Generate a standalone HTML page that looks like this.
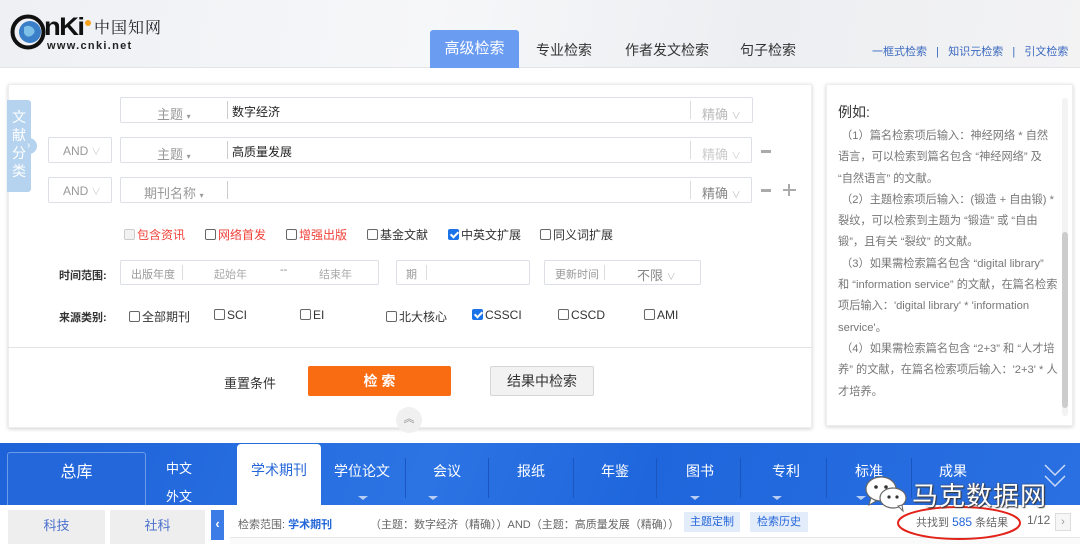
<!DOCTYPE html>
<html><head><meta charset="utf-8"><style>
*{box-sizing:border-box;margin:0;padding:0}
body{width:1080px;height:544px;overflow:hidden;font-family:"Liberation Sans","Noto Sans CJK SC",sans-serif;background:#fff;position:relative;color:#333}
.a{position:absolute;white-space:nowrap}
.hdr{left:0;top:0;width:1080px;height:68px;background:linear-gradient(100deg,#eef0f4 0%,#f6f7f9 40%,#eceef1 70%,#f3f3f4 100%);border-bottom:1px solid #e2e4e8}
.box{position:absolute;border:1px solid #dcdfe6;background:#fff;border-radius:2px}
.g{color:#999}
.cb{display:inline-block;width:11px;height:11px;border:1px solid #666;border-radius:2px;vertical-align:-1px;margin-right:2px;background:#fff}
.cbk{background:#1a73e8;border-color:#1a73e8;position:relative}
.cbk:after{content:"";position:absolute;left:3px;top:0px;width:3px;height:6px;border:solid #fff;border-width:0 2px 2px 0;transform:rotate(45deg)}
.s13{font-size:13px}.s12{font-size:12px}
.nav{left:0;top:443px;width:1080px;height:62px;background:linear-gradient(110deg,#1d62d8 0%,#2c74e4 40%,#1f66dc 60%,#2a70e2 100%)}
.nt{color:#fff;font-size:15px;top:461px}
.dv{top:458px;width:1px;height:40px;background:#1a55c0}
.tri{width:0;height:0;border-left:5px solid transparent;border-right:5px solid transparent;border-top:4px solid #b8cdf3;top:496px}
</style></head><body>
<div class="a hdr"></div>
<!-- logo -->
<svg class="a" style="left:10px;top:14px" width="36" height="36" viewBox="0 0 36 36"><circle cx="18" cy="18" r="15.5" fill="none" stroke="#111" stroke-width="4"/><circle cx="20" cy="18" r="11" fill="#3a7fc8"/><path d="M14 13q5-3 9 1t-2 8q-5 2-7-3z" fill="#7fc0e8"/></svg>
<div class="a" style="left:44px;top:14px;font-size:25px;line-height:26px;font-weight:bold;color:#111;letter-spacing:-1.5px;transform:scaleX(1.1);transform-origin:left">nKi</div>
<div class="a" style="left:85px;top:20px;width:6px;height:6px;border-radius:50%;background:#f7a21b"></div>
<div class="a" style="left:94px;top:17px;font-size:16px;line-height:20px;color:#222;font-family:'Noto Serif CJK SC',serif;letter-spacing:1px">中国知网</div>
<div class="a" style="left:47px;top:40px;font-size:11px;line-height:12px;color:#222;letter-spacing:1.3px;font-weight:bold">www.cnki.net</div>
<div class="a" style="left:430px;top:30px;width:89px;height:38px;background:#6a9cf2;border-radius:3px 3px 0 0;color:#fff;font-size:15px;text-align:center;line-height:38px">高级检索</div>
<div class="a" style="left:536px;top:40px;font-size:14px">专业检索</div>
<div class="a" style="left:625px;top:40px;font-size:14px">作者发文检索</div>
<div class="a" style="left:740px;top:40px;font-size:14px">句子检索</div>
<div class="a" style="left:872px;top:43px;font-size:11px;color:#3c6ac0">一框式检索 &nbsp;&nbsp;|&nbsp;&nbsp; 知识元检索 &nbsp;&nbsp;|&nbsp;&nbsp; 引文检索</div>

<!-- main panel -->
<div class="a" style="left:8px;top:84px;width:804px;height:344px;background:#fff;box-shadow:0 1px 4px rgba(0,0,0,.18);border:1px solid #eee"></div>
<div class="a" style="left:8px;top:347px;width:804px;height:1px;background:#e3e3e3"></div>
<div class="a" style="left:7px;top:100px;width:24px;height:92px;background:#b5d3ef;border-radius:0 3px 3px 0;color:#fff;font-size:14px;line-height:18px;text-align:center;padding-top:8px;white-space:normal">文<br>献<br>分<br>类</div>
<div class="a" style="left:27px;top:138px;width:10px;height:16px;background:#b5d3ef;border-radius:0 8px 8px 0;color:#fff;font-size:10px;line-height:16px">›</div>

<div class="box" style="left:120px;top:97px;width:633px;height:26px"></div>
<div class="box" style="left:120px;top:137px;width:632px;height:26px"></div>
<div class="box" style="left:120px;top:177px;width:632px;height:26px"></div>
<div class="box" style="left:48px;top:137px;width:64px;height:26px"></div>
<div class="box" style="left:48px;top:177px;width:64px;height:26px"></div>
<div class="a s12 g" style="left:63px;top:144px">AND <span style="font-size:9px;color:#ccc">∨</span></div>
<div class="a s12 g" style="left:63px;top:184px">AND <span style="font-size:9px;color:#ccc">∨</span></div>
<div class="a s13 g" style="left:157px;top:104px">主题 <span style="font-size:8px">▾</span></div>
<div class="a s13 g" style="left:157px;top:144px">主题 <span style="font-size:8px">▾</span></div>
<div class="a s13 g" style="left:144px;top:183px">期刊名称 <span style="font-size:8px">▾</span></div>
<div class="a" style="left:227px;top:101px;width:1px;height:18px;background:#ccc"></div>
<div class="a" style="left:227px;top:141px;width:1px;height:18px;background:#ccc"></div>
<div class="a" style="left:227px;top:181px;width:1px;height:18px;background:#ccc"></div>
<div class="a s12" style="left:232px;top:103px;color:#222">数字经济</div>
<div class="a s12" style="left:232px;top:143px;color:#222">高质量发展</div>
<div class="a" style="left:690px;top:101px;width:1px;height:18px;background:#ddd"></div>
<div class="a" style="left:690px;top:141px;width:1px;height:18px;background:#ddd"></div>
<div class="a" style="left:690px;top:181px;width:1px;height:18px;background:#ddd"></div>
<div class="a s13" style="left:702px;top:104px;color:#bbb">精确 <span style="font-size:9px">∨</span></div>
<div class="a s13" style="left:702px;top:144px;color:#ccc">精确 <span style="font-size:9px">∨</span></div>
<div class="a s13" style="left:702px;top:183px;color:#888">精确 <span style="font-size:9px;color:#bbb">∨</span></div>
<div class="a" style="left:761px;top:150px;width:10px;height:3px;background:#aaa"></div>
<div class="a" style="left:761px;top:189px;width:10px;height:3px;background:#aaa"></div>
<div class="a" style="left:783px;top:189px;width:13px;height:2px;background:#aaa"></div>
<div class="a" style="left:788px;top:184px;width:2px;height:12px;background:#aaa"></div>

<div class="a s12" style="left:124px;top:226px;color:#f0423a"><span class="cb" style="border-color:#ccc;background:#f2f2f2"></span>包含资讯</div>
<div class="a s12" style="left:205px;top:226px;color:#f0423a"><span class="cb"></span>网络首发</div>
<div class="a s12" style="left:286px;top:226px;color:#f0423a"><span class="cb"></span>增强出版</div>
<div class="a s12" style="left:367px;top:226px"><span class="cb"></span>基金文献</div>
<div class="a s12" style="left:448px;top:226px"><span class="cb cbk"></span>中英文扩展</div>
<div class="a s12" style="left:540px;top:226px"><span class="cb"></span>同义词扩展</div>

<div class="a" style="left:59px;top:267px;font-size:11px;font-weight:bold;color:#333">时间范围:</div>
<div class="box" style="left:120px;top:260px;width:259px;height:25px"></div>
<div class="a" style="left:182px;top:265px;width:1px;height:15px;background:#ddd"></div>
<div class="a g" style="left:131px;top:266px;font-size:11px">出版年度</div>
<div class="a" style="left:214px;top:266px;font-size:11px;color:#aaa">起始年</div>
<div class="a" style="left:280px;top:264px;font-size:11px;color:#888">--</div>
<div class="a" style="left:319px;top:266px;font-size:11px;color:#aaa">结束年</div>
<div class="box" style="left:396px;top:260px;width:134px;height:25px"></div>
<div class="a" style="left:426px;top:265px;width:1px;height:15px;background:#ddd"></div>
<div class="a g" style="left:406px;top:266px;font-size:11px">期</div>
<div class="box" style="left:544px;top:260px;width:157px;height:25px"></div>
<div class="a" style="left:604px;top:265px;width:1px;height:15px;background:#ddd"></div>
<div class="a g" style="left:555px;top:266px;font-size:11px">更新时间</div>
<div class="a" style="left:637px;top:265px;font-size:13px;color:#888">不限 <span style="font-size:9px;color:#bbb">∨</span></div>

<div class="a" style="left:59px;top:309px;font-size:11px;font-weight:bold;color:#333">来源类别:</div>
<div class="a s12" style="left:129px;top:308px"><span class="cb"></span>全部期刊</div>
<div class="a s12" style="left:214px;top:308px"><span class="cb"></span>SCI</div>
<div class="a s12" style="left:300px;top:308px"><span class="cb"></span>EI</div>
<div class="a s12" style="left:386px;top:308px"><span class="cb"></span>北大核心</div>
<div class="a s12" style="left:472px;top:308px"><span class="cb cbk"></span>CSSCI</div>
<div class="a s12" style="left:558px;top:308px"><span class="cb"></span>CSCD</div>
<div class="a s12" style="left:644px;top:308px"><span class="cb"></span>AMI</div>

<div class="a s13" style="left:224px;top:373px;color:#333">重置条件</div>
<div class="a" style="left:308px;top:366px;width:143px;height:30px;background:#fa6c12;color:#fff;font-weight:bold;font-size:14px;text-align:center;line-height:30px;border-radius:2px">检 索</div>
<div class="a" style="left:490px;top:366px;width:104px;height:30px;background:#f2f2f2;border:1px solid #d6d6d6;color:#333;font-size:14px;text-align:center;line-height:28px;border-radius:2px">结果中检索</div>
<div class="a" style="left:396px;top:407px;width:26px;height:26px;border-radius:50%;background:#f0f0f0;color:#888;font-size:11px;text-align:center;line-height:24px">︽</div>

<!-- right panel -->
<div class="a" style="left:826px;top:84px;width:247px;height:342px;background:#fff;box-shadow:0 1px 4px rgba(0,0,0,.18);border:1px solid #eee"></div>
<div class="a" style="left:1062px;top:98px;width:6px;height:318px;background:#f3f3f3;border-radius:3px"></div>
<div class="a" style="left:1062px;top:232px;width:6px;height:176px;background:#ccc;border-radius:3px"></div>
<div class="a" style="left:838px;top:102px;font-size:14px;color:#333">例如:</div>
<div class="a" style="left:838px;top:126px;width:220px;font-size:11.2px;line-height:21.3px;color:#777;white-space:normal">&nbsp;（1）篇名检索项后输入：神经网络 * 自然语言，可以检索到篇名包含 “神经网络” 及 “自然语言” 的文献。<br>&nbsp;（2）主题检索项后输入：(锻造 + 自由锻) * 裂纹，可以检索到主题为 “锻造” 或 “自由锻”，且有关 “裂纹” 的文献。<br>&nbsp;（3）如果需检索篇名包含 “digital library” 和 “information service” 的文献，在篇名检索项后输入：'digital library' * 'information service'。<br>&nbsp;（4）如果需检索篇名包含 “2+3” 和 “人才培养” 的文献，在篇名检索项后输入：'2+3' * 人才培养。</div>

<!-- nav -->
<div class="a nav"></div>
<div class="a" style="left:7px;top:452px;width:139px;height:53px;border:1px solid #6b9be9;border-bottom:none;border-radius:3px 3px 0 0;background:#2467db;color:#fff;font-size:16px;text-align:center;line-height:40px">总库</div>
<div class="a" style="left:166px;top:458px;color:#fff;font-size:13px">中文</div>
<div class="a" style="left:166px;top:486px;color:#fff;font-size:13px">外文</div>
<div class="a" style="left:237px;top:444px;width:84px;height:62px;background:#fff;border-radius:4px 4px 0 0;color:#2466d8;font-size:14px;text-align:center;padding-top:16px">学术期刊</div>
<div class="a nt" style="left:334px;font-size:14px">学位论文</div>
<div class="a nt" style="left:433px;font-size:14px">会议</div>
<div class="a nt" style="left:517px;font-size:14px">报纸</div>
<div class="a nt" style="left:601px;font-size:14px">年鉴</div>
<div class="a nt" style="left:686px;font-size:14px">图书</div>
<div class="a nt" style="left:772px;font-size:14px">专利</div>
<div class="a nt" style="left:855px;font-size:14px">标准</div>
<div class="a nt" style="left:939px;font-size:14px">成果</div>
<div class="a dv" style="left:405px"></div><div class="a dv" style="left:488px"></div><div class="a dv" style="left:573px"></div><div class="a dv" style="left:656px"></div><div class="a dv" style="left:740px"></div><div class="a dv" style="left:826px"></div><div class="a dv" style="left:911px"></div>
<div class="a tri" style="left:358px"></div><div class="a tri" style="left:428px"></div><div class="a tri" style="left:690px"></div><div class="a tri" style="left:772px"></div><div class="a tri" style="left:856px"></div>
<svg class="a" style="left:1043px;top:463px" width="24" height="26" viewBox="0 0 24 26"><path d="M2 2l10 10 10-10M2 13l10 10 10-10" fill="none" stroke="#c9dbf8" stroke-width="1.5"/></svg>

<!-- bottom -->
<div class="a" style="left:8px;top:510px;width:97px;height:34px;background:#eeeeee;color:#4a6fcc;font-size:13px;text-align:center;line-height:32px">科技</div>
<div class="a" style="left:110px;top:510px;width:95px;height:34px;background:#eeeeee;color:#4a6fcc;font-size:13px;text-align:center;line-height:32px">社科</div>
<div class="a" style="left:211px;top:510px;width:13px;height:30px;background:#3c7ce6;color:#fff;font-size:13px;font-weight:bold;text-align:center;line-height:28px">‹</div>
<div class="a" style="left:230px;top:537px;width:850px;height:7px;border-top:1px solid #e6e6e6;background:#fafafa"></div>
<div class="a" style="left:238px;top:516px;font-size:11px;color:#666">检索范围: <b style="color:#2466d8;font-weight:bold">学术期刊</b></div>
<div class="a" style="left:370px;top:516px;font-size:11px;color:#666">（主题：数字经济（精确））AND（主题：高质量发展（精确））</div>
<div class="a" style="left:684px;top:512px;width:56px;height:20px;background:#e3ecfb;color:#2466d8;font-size:11px;text-align:center;line-height:20px">主题定制</div>
<div class="a" style="left:750px;top:512px;width:58px;height:20px;background:#e3ecfb;color:#2466d8;font-size:11px;text-align:center;line-height:20px">检索历史</div>
<div class="a" style="left:916px;top:514px;font-size:11px;color:#666">共找到 <span style="color:#2466d8;font-size:12px">585</span> 条结果</div>
<div class="a" style="left:1027px;top:513px;font-size:12px;color:#666">1/12</div>
<div class="a" style="left:1055px;top:513px;width:16px;height:18px;border:1px solid #ddd;background:#f6f6f6;color:#999;font-size:11px;text-align:center;line-height:16px">›</div>
<svg class="a" style="left:895px;top:503px" width="130" height="40"><ellipse cx="64" cy="20" rx="61" ry="16" fill="none" stroke="#e2231a" stroke-width="2"/></svg>

<!-- watermark -->
<svg class="a" style="left:864px;top:475px" width="46" height="40" viewBox="0 0 46 40"><ellipse cx="17" cy="14" rx="15" ry="12" fill="#fff" stroke="#666" stroke-width="1.2"/><path d="M7 23l-2 7 7-4z" fill="#fff" stroke="#666"/><ellipse cx="29" cy="23" rx="13" ry="10" fill="#fff" stroke="#666" stroke-width="1.2"/><path d="M34 31l5 5-1-6z" fill="#fff" stroke="#666"/><circle cx="12" cy="12" r="1.8" fill="#333"/><circle cx="22" cy="12" r="1.8" fill="#333"/><circle cx="25" cy="22" r="1.6" fill="#333"/><circle cx="33" cy="22" r="1.6" fill="#333"/></svg>
<div class="a" style="left:912px;top:476px;font-size:26px;color:#fff;letter-spacing:1px;text-shadow:0 0 2px #444,1px 1px 1px #333">马克数据网</div>
</body></html>
